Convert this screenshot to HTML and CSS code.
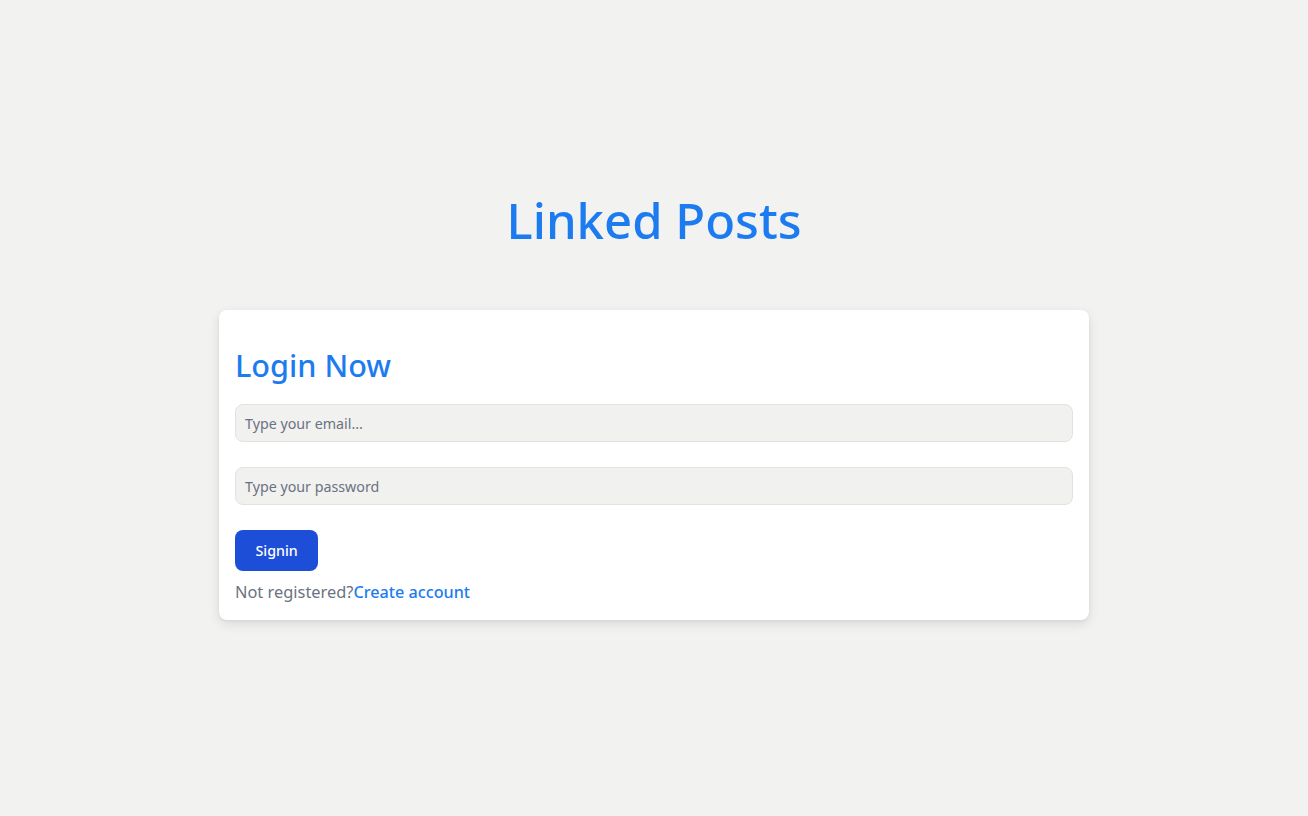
FILE: index.html
```html
<!DOCTYPE html>
<html lang="en">
<head>
<meta charset="utf-8">
<title>Linked Posts</title>
<link rel="stylesheet" href="styles.css">
</head>
<body>
<main class="page">
  <h1 class="brand">Linked Posts</h1>
  <section class="card">
    <h2 class="card-title">Login Now</h2>
    <form class="form">
      <input class="field" type="email" placeholder="Type your email...">
      <input class="field" type="password" placeholder="Type your password">
      <button class="btn" type="button">Signin</button>
    </form>
    <p class="note">Not registered?<a class="link" href="#">Create account</a></p>
  </section>
</main>
</body>
</html>
```
FILE: styles.css
```css
* { box-sizing: border-box; }
html, body { margin: 0; padding: 0; }
body {
  background: #f2f2f1;
  font-family: "Noto Sans", "Open Sans", sans-serif;
  color: #6b7280;
}
.page {
  height: 100vh;
  display: flex;
  flex-direction: column;
  align-items: center;
  justify-content: center;
}
.brand {
  margin: 0 0 66px;
  font-size: 49px;
  line-height: 48px;
  font-weight: 500;
  color: #1d7bf0;
}
.card {
  width: 870px;
  background: #ffffff;
  border-radius: 8px;
  padding: 16px;
  box-shadow: 0 4px 12px rgba(0,0,0,0.10), 0 1px 3px rgba(0,0,0,0.06);
}
.card-title {
  margin: 21px 0 21px;
  font-size: 30.6px;
  line-height: 36px;
  font-weight: 500;
  color: #1d7bf0;
}
.form {
  display: flex;
  flex-direction: column;
  align-items: flex-start;
}
.field {
  width: 100%;
  height: 38px;
  margin: 0 0 25px;
  padding: 8px 9px;
  border: 1px solid #e2e2e2;
  border-radius: 8px;
  background: #f1f1f0;
  font-family: inherit;
  font-size: 14.25px;
  color: #374151;
  outline: none;
}
.field::placeholder { color: #6b7280; }
.btn {
  height: 41px;
  padding: 0 20.5px;
  border: none;
  border-radius: 8px;
  background: #1d4ed8;
  color: #ffffff;
  font-family: inherit;
  font-size: 14.25px;
  font-weight: 500;
  cursor: pointer;
}
.note {
  margin: 9px 0 0;
  font-size: 16.4px;
  line-height: 24px;
  color: #6b7280;
}
.link {
  color: #1d7bf0;
  text-decoration: none;
  font-weight: 500;
  font-size: 16.2px;
}
```
